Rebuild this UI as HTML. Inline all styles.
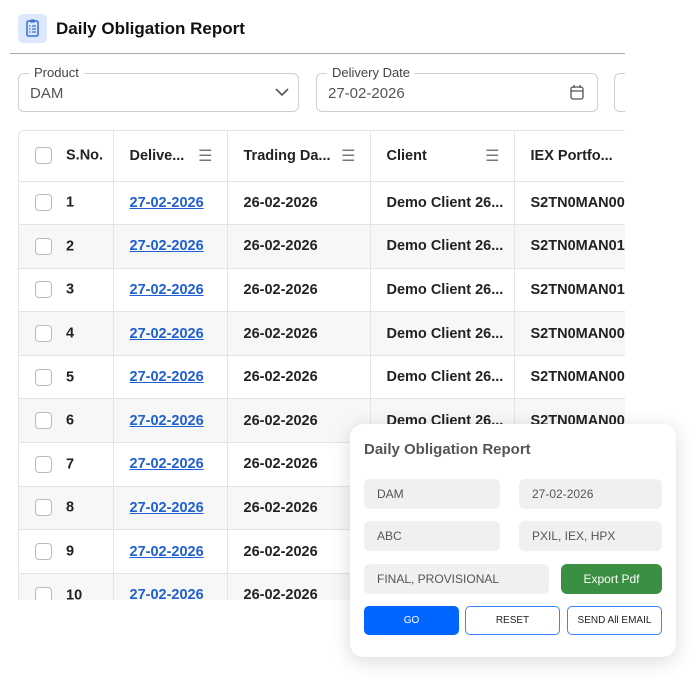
<!DOCTYPE html>
<html><head><style>
*{box-sizing:border-box;margin:0;padding:0}
body{width:700px;height:681px;background:#fff;font-family:"Liberation Sans",sans-serif;position:relative;overflow:hidden;color:#222}
.abs{position:absolute}
.fld{position:absolute;border:1px solid #cfcfcf;border-radius:6px;height:39px;top:73px}
.fld .lb{position:absolute;top:-9px;left:10px;background:#fff;padding:0 5px;font-size:13px;color:#444}
.fld .v{position:absolute;left:11px;top:11px;font-size:15px;color:#555}
table{position:absolute;left:0;top:0;width:625px;border-collapse:collapse;font-size:14.5px;font-weight:bold;table-layout:fixed}
td,th{height:43.6px;border-bottom:1px solid #e4e4e4;border-right:1px solid #e4e4e4;padding:0 0 0 16px;white-space:nowrap;overflow:hidden;text-align:left;vertical-align:middle}
th{height:50px;color:#222}
th div{display:flex;align-items:center;justify-content:space-between;padding-right:14px}
th.l div{padding-right:2px}
tr:nth-child(odd) td{background:#f7f7f7}
.cb{display:inline-block;width:17px;height:17px;border:1.5px solid #bbb;border-radius:4px;vertical-align:middle;margin-right:14px;background:#fff}
a{color:#1f5fd0;text-decoration:underline}
.mn{color:#777;font-weight:normal;font-size:16px}
.card{position:absolute;left:350px;top:424px;width:326px;height:233px;background:#fff;border-radius:14px;box-shadow:0 4px 20px rgba(0,0,0,.15)}
.in{position:absolute;background:#f0f0f0;border-radius:6px;height:30px;font-size:12px;color:#555;padding:8px 13px}
.bt{position:absolute;top:182px;height:29px;width:95px;border-radius:5px;font-size:10px;text-align:center;line-height:27px;border:1.5px solid #3a86ff;color:#222}
</style></head><body>
<div class="abs" style="left:18px;top:14px;width:29px;height:29px;background:#dbe8fd;border-radius:5px">
<svg width="29" height="29" viewBox="0 0 29 29"><rect x="9" y="7" width="11" height="15" rx="1.5" fill="none" stroke="#3b6fd6" stroke-width="1.5"/><rect x="12" y="5.5" width="5" height="3" rx="1" fill="#3b6fd6"/><path d="M11 12h1.5M14 12h4M11 15h1.5M14 15h4M11 18h1.5M14 18h4" stroke="#3b6fd6" stroke-width="1.2"/></svg></div>
<div class="abs" style="left:56px;top:19px;font-size:17px;font-weight:bold;color:#111">Daily Obligation Report</div>
<div class="abs" style="left:10px;top:53px;width:615px;height:1px;background:#aaa"></div>
<div class="fld" style="left:18px;width:281px"><span class="lb">Product</span><span class="v">DAM</span>
<svg class="abs" style="right:9px;top:13px" width="14" height="10"><path d="M1 2l6 6 6-6" fill="none" stroke="#555" stroke-width="1.6"/></svg></div>
<div class="fld" style="left:316px;width:282px"><span class="lb">Delivery Date</span><span class="v">27-02-2026</span>
<svg class="abs" style="right:13px;top:10px" width="14" height="17"><rect x="1" y="3" width="12" height="12" rx="2" fill="none" stroke="#555" stroke-width="1.3"/><path d="M1 7h12M4 1v3M10 1v3" stroke="#555" stroke-width="1.3"/></svg></div>
<div class="fld" style="left:614px;width:40px"></div>
<div class="abs" style="left:625px;top:60px;width:75px;height:621px;background:#fff"></div>
<div class="abs" style="left:18px;top:130px;width:607px;height:470px;overflow:hidden;border:1px solid #e4e4e4;border-bottom:none;border-right:none;border-radius:6px 0 0 0">
<table>
<colgroup><col style="width:94px"><col style="width:114px"><col style="width:143px"><col style="width:144px"><col style="width:130px"></colgroup>
<tr><th><span class="cb"></span>S.No.</th><th><div>Delive... <span class="mn">☰</span></div></th><th><div>Trading Da... <span class="mn">☰</span></div></th><th><div>Client <span class="mn">☰</span></div></th><th class="l"><div>IEX Portfo... <span class="mn">☰</span></div></th></tr>
<tr><td><span class="cb"></span>1</td><td><a>27-02-2026</a></td><td>26-02-2026</td><td>Demo Client 26...</td><td>S2TN0MAN00.</td></tr>
<tr><td><span class="cb"></span>2</td><td><a>27-02-2026</a></td><td>26-02-2026</td><td>Demo Client 26...</td><td>S2TN0MAN01.</td></tr>
<tr><td><span class="cb"></span>3</td><td><a>27-02-2026</a></td><td>26-02-2026</td><td>Demo Client 26...</td><td>S2TN0MAN01.</td></tr>
<tr><td><span class="cb"></span>4</td><td><a>27-02-2026</a></td><td>26-02-2026</td><td>Demo Client 26...</td><td>S2TN0MAN00.</td></tr>
<tr><td><span class="cb"></span>5</td><td><a>27-02-2026</a></td><td>26-02-2026</td><td>Demo Client 26...</td><td>S2TN0MAN00.</td></tr>
<tr><td><span class="cb"></span>6</td><td><a>27-02-2026</a></td><td>26-02-2026</td><td>Demo Client 26...</td><td>S2TN0MAN00.</td></tr>
<tr><td><span class="cb"></span>7</td><td><a>27-02-2026</a></td><td>26-02-2026</td><td>Demo Client 26...</td><td>S2TN0MAN00.</td></tr>
<tr><td><span class="cb"></span>8</td><td><a>27-02-2026</a></td><td>26-02-2026</td><td>Demo Client 26...</td><td>S2TN0MAN00.</td></tr>
<tr><td><span class="cb"></span>9</td><td><a>27-02-2026</a></td><td>26-02-2026</td><td>Demo Client 26...</td><td>S2TN0MAN00.</td></tr>
<tr><td><span class="cb"></span>10</td><td><a>27-02-2026</a></td><td>26-02-2026</td><td>Demo Client 26...</td><td>S2TN0MAN00.</td></tr>
</table></div>
<div class="card">
<div class="abs" style="left:14px;top:17px;font-size:15px;font-weight:bold;color:#555">Daily Obligation Report</div>
<div class="in" style="left:14px;top:55px;width:136px">DAM</div>
<div class="in" style="left:169px;top:55px;width:143px">27-02-2026</div>
<div class="in" style="left:14px;top:97px;width:136px">ABC</div>
<div class="in" style="left:169px;top:97px;width:143px">PXIL, IEX, HPX</div>
<div class="in" style="left:14px;top:140px;width:185px">FINAL, PROVISIONAL</div>
<div class="in" style="left:211px;top:140px;width:101px;background:#3a8f43;color:#fff;text-align:center;font-size:12px;padding:8px 0">Export Pdf</div>
<div class="bt" style="left:14px;background:#0066ff;color:#fff;border-color:#0066ff">GO</div>
<div class="bt" style="left:115px">RESET</div>
<div class="bt" style="left:217px">SEND All EMAIL</div>
</div>
</body></html>
